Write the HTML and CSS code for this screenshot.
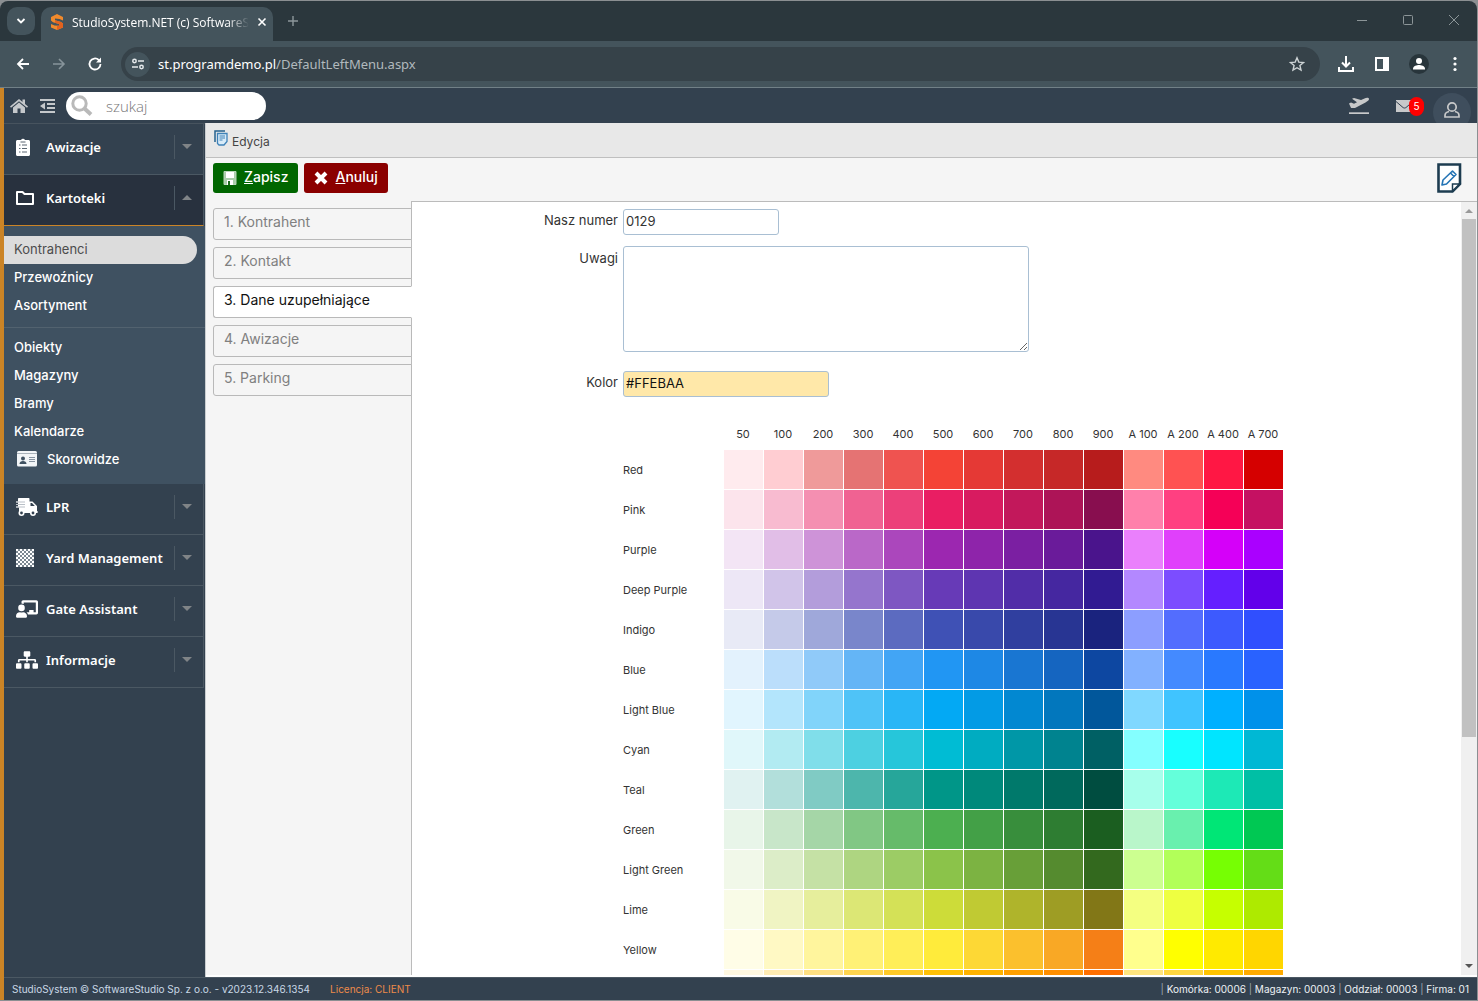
FILE: index.html
```html
<!DOCTYPE html>
<html lang="pl">
<head>
<meta charset="utf-8">
<title>StudioSystem.NET (c) SoftwareStudio</title>
<link rel="stylesheet" href="styles.css">
</head>
<body>
<div class="window">
  <div class="tabstrip">
    <button class="tab-search" aria-label="Szukaj kart"><svg width="10" height="10" viewBox="0 0 10 10"><path d="M1.5 3l3.5 3.5L8.500 3" fill="none" stroke="#fff" stroke-width="1.800"/></svg></button>
    <div class="browser-tab">
      <svg width="14" height="16" viewBox="0 0 14 16"><path d="M7 0l6 3v3.500L9.500 5 5 4.500v1.700l6 1.800 2 1.500v4L7 16l-6-2.500V10l3.500 1.500 4.500.3V10L3 8.200 1 6.500V3z" fill="#f08a2c"/><path d="M5 6.200l6 1.800 2 1.500v4L7 16v-4.300l2 .1V10L5 8.800z" fill="#e2621f"/></svg>
      <span class="tab-title">StudioSystem.NET (c) SoftwareS</span>
      <button class="plain" aria-label="Zamknij kartę"><svg width="10" height="10" viewBox="0 0 10 10"><path d="M1.500 1.500l7 7M8.500 1.500l-7 7" stroke="#fff" stroke-width="1.600"/></svg></button>
    </div>
    <button class="plain new-tab" aria-label="Nowa karta"><svg width="12" height="12" viewBox="0 0 12 12"><path d="M6 1v10M1 6h10" stroke="#8d979b" stroke-width="1.400"/></svg></button>
    <div class="window-controls">
      <button class="plain" aria-label="Minimalizuj"><svg width="12" height="12" viewBox="0 0 12 12"><path d="M1 6.500h10" stroke="#8c9598"/></svg></button>
      <button class="plain" aria-label="Maksymalizuj"><svg width="12" height="12" viewBox="0 0 12 12"><rect x="1.500" y="1.500" width="9" height="9" rx="1" fill="none" stroke="#8c9598"/></svg></button>
      <button class="plain" aria-label="Zamknij"><svg width="12" height="12" viewBox="0 0 12 12"><path d="M1 1l10 10M11 1L1 11" stroke="#8c9598"/></svg></button>
    </div>
  </div>

  <div class="navbar">
    <button class="plain" aria-label="Wstecz"><svg width="16" height="16" viewBox="0 0 16 16"><path d="M14 8H3M8 3L3 8l5 5" fill="none" stroke="#fff" stroke-width="1.800"/></svg></button>
    <button class="plain" aria-label="Dalej"><svg width="16" height="16" viewBox="0 0 16 16"><path d="M2 8h11M8 3l5 5-5 5" fill="none" stroke="#87949a" stroke-width="1.600"/></svg></button>
    <button class="plain" aria-label="Odśwież"><svg width="16" height="16" viewBox="0 0 16 16"><path d="M13.500 8A5.500 5.500 0 1 1 11.800 4L13 5.200" fill="none" stroke="#fff" stroke-width="1.800"/><path d="M14 1.500v5H9z" fill="#fff"/></svg></button>
    <div class="address">
      <span class="site-info"><svg width="14" height="14" viewBox="0 0 14 14" fill="none" stroke="#e6eaec" stroke-width="1.500"><circle cx="3.500" cy="4" r="1.700"/><path d="M7 4h6M1 10h6"/><circle cx="10.500" cy="10" r="1.700"/></svg></span>
      <span class="url"><b>st.programdemo.pl</b>/DefaultLeftMenu.aspx</span>
      <button class="plain" aria-label="Dodaj do zakładek"><svg width="16" height="16" viewBox="0 0 16 16"><path d="M8 1.800l1.800 4.300 4.700.4-3.600 3 1.100 4.600L8 11.700 4 14.100l1.100-4.600-3.600-3 4.700-.4z" fill="none" stroke="#cdd3d5" stroke-width="1.400"/></svg></button>
    </div>
    <div class="nav-actions">
      <button class="plain" aria-label="Pobrane"><svg width="18" height="18" viewBox="0 0 18 18" fill="none" stroke="#fff" stroke-width="2"><path d="M9 1v10M5 7.500l4 4 4-4M2 12v4h14v-4"/></svg></button>
      <button class="plain" aria-label="Panel boczny"><svg width="18" height="18" viewBox="0 0 18 18"><path d="M2 2h14v14H2zM4 4v10h6V4z" fill="#fff" fill-rule="evenodd"/></svg></button>
      <button class="plain" aria-label="Profil"><svg width="20" height="20" viewBox="0 0 20 20"><circle cx="10" cy="10" r="10" fill="#28353b"/><circle cx="10" cy="7" r="3" fill="#fff"/><path d="M4 15.500v-1c0-2.500 4-3.500 6-3.500s6 1 6 3.500v1z" fill="#fff"/></svg></button>
      <button class="plain" aria-label="Menu"><svg width="4" height="16" viewBox="0 0 4 16" fill="#fff"><circle cx="2" cy="2.500" r="1.600"/><circle cx="2" cy="8" r="1.600"/><circle cx="2" cy="13.500" r="1.600"/></svg></button>
    </div>
  </div>

  <div class="app">
    <header class="app-header">
      <a href="#" aria-label="Strona główna"><svg width="18" height="16" viewBox="0 0 18 16" fill="#c5c8cb"><path d="M9 1L0 8.500l1 1.200L9 3.200l8 6.500 1-1.200-3-2.500V1.500h-2.500v2.400z"/><path d="M9 4.500l-6 5V15h4.500v-4.500h3V15H15V9.500z"/></svg></a>
      <a href="#" aria-label="Zwiń menu"><svg width="16" height="14" viewBox="0 0 16 14" fill="#c5c8cb"><path d="M0 0h15v2H0zM7 4h8v2H7zM7 8h8v2H7zM0 12h15v2H0zM0 7l5-3.500v7z"/></svg></a>
      <div class="search"><svg width="22" height="22" viewBox="0 0 22 22" fill="none" stroke="#b9b9b9"><circle cx="8.500" cy="8.500" r="6.700" stroke-width="3"/><path d="M13.500 13.500l6.500 6" stroke-width="4"/></svg><input type="text" placeholder="szukaj" aria-label="szukaj"></div>
      <div class="header-actions">
        <a href="#" aria-label="Odloty"><svg width="22" height="18" viewBox="0 0 22 18" fill="#c8c9ca"><path d="M1 15.300h20v1.700H1z"/><path d="M1 6.500l2-1 3 1.300 3-1.600-5-3.400L6 1l7 2 3.500-1.600c2-.9 4.500-.9 4.500.6 0 1.200-1.500 2.400-3.500 3.400L8 10.500c-.8.400-1.200.5-2 .5H3.800c-.5 0-.8-.2-1-.6z"/></svg></a>
        <a href="#" class="mail" aria-label="Wiadomości"><svg width="17" height="12" viewBox="0 0 17 12"><path d="M0 0h17v12H0z" fill="#c8c9ca"/><path d="M0 1.500l7 6c1 .7 2 .7 3 0l7-6" fill="none" stroke="#32404f" stroke-width="1"/></svg><span class="badge">5</span></a>
        <a href="#" class="user" aria-label="Konto"><svg width="16" height="18" viewBox="0 0 16 18" fill="none" stroke="#c8c9ca" stroke-width="1.700"><circle cx="8" cy="6" r="4.200"/><path d="M5 10.500c-2.500.5-4 2-4 4V16h14v-1.500c0-2-1.500-3.500-4-4"/></svg></a>
      </div>
    </header>

    <div class="body">
      <nav class="sidebar">
        <a href="#" class="item"><svg class="ico" viewBox="0 0 22 18"><path d="M1.500 2H5a2.300 2.300 0 0 1 4 0h3.500c.8 0 1.500.7 1.500 1.500v13c0 .8-.7 1.500-1.500 1.500h-11c-.8 0-1.500-.7-1.500-1.500v-13C0 2.700.7 2 1.500 2z" fill="#fff"/><path d="M3 7h1.500M6 7h5M3 10.500h1.500M6 10.500h5M3 14h1.500M6 14h5M4.500 4h5" stroke="#5a6672" stroke-width="1"/></svg><span>Awizacje</span><i class="caret"></i></a>
        <a href="#" class="item open"><svg class="ico" viewBox="0 0 22 18"><path d="M1 3h5.500l2 2H17v10H1z" fill="none" stroke="#fff" stroke-width="2" stroke-linejoin="round"/></svg><span>Kartoteki</span><i class="caret"></i></a>
        <div class="submenu">
          <a href="#" class="active">Kontrahenci</a>
          <a href="#">Przewoźnicy</a>
          <a href="#">Asortyment</a>
          <hr>
          <a href="#">Obiekty</a>
          <a href="#">Magazyny</a>
          <a href="#">Bramy</a>
          <a href="#">Kalendarze</a>
          <a href="#" class="with-icon"><svg width="20" height="16" viewBox="0 0 20 16"><rect width="20" height="15.500" rx="1.500" fill="#f2f5f7"/><path d="M0 2.500h20" stroke="#a9b2ba" stroke-width="1"/><circle cx="6" cy="7.500" r="2" fill="#3f5161"/><path d="M2.500 13c0-2 1.500-3 3.500-3s3.500 1 3.500 3z" fill="#3f5161"/><path d="M12 6.500h6M12 8.500h6M12 10.500h6" stroke="#8793a0" stroke-width="1"/></svg>Skorowidze</a>
        </div>
        <a href="#" class="item"><svg class="ico" viewBox="0 0 22 18"><path d="M3 0h9.500c.6 0 1 .4 1 1v2.500h3L21 8v5c1 0 1 2 0 2H3V9.500H0V8.500h2V7H0V6h2V4.500H0v-1h2V1c0-.600.4-1 1-1z" fill="#fff"/><path d="M0 3.500h9v1H0zM0 6h9v1H0zM0 8.500h9v1H0z" fill="#b9c0c7"/><circle cx="5.500" cy="15" r="3" fill="#fff"/><circle cx="17" cy="15" r="3" fill="#fff"/><circle cx="5.500" cy="15" r="1.400" fill="#32404f"/><circle cx="17" cy="15" r="1.400" fill="#32404f"/><path d="M14.500 5H16l2.800 3h-4.300z" fill="#32404f"/></svg><span>LPR</span><i class="caret"></i></a>
        <a href="#" class="item"><svg class="ico" viewBox="0 0 22 18"><defs><pattern id="check" width="4" height="4" patternUnits="userSpaceOnUse"><path d="M0 0h2v2H0zM2 2h2v2H2z" fill="#fff"/><path d="M2 0h2v2H2zM0 2h2v2H0z" fill="#7b8791"/></pattern></defs><rect width="18" height="18" fill="url(#check)"/></svg><span>Yard Management</span><i class="caret"></i></a>
        <a href="#" class="item"><svg class="ico" viewBox="0 0 640 512" fill="#fff"><path d="M208 352c-2.400 0-4.800.3-7 1a132 132 0 0 1-82 0c-2.200-.7-4.600-1-7-1C50 352-.3 402.500 0 464.600.1 491 21.700 512 48 512h224c26.300 0 47.900-21 48-47.400.3-62-50-112.600-112-112.600zm-48-32a96 96 0 1 0 0-192 96 96 0 0 0 0 192zM592 0H208c-26.500 0-48 22.300-48 49.600V96c23.400 0 45 6.800 64 17.800V64h352v288h-64v-64H384v64h-76.200c19 16.700 33 38.700 39.700 64H592c26.500 0 48-22.300 48-49.600V49.600C640 22.300 618.500 0 592 0z"/></svg><span>Gate Assistant</span><i class="caret"></i></a>
        <a href="#" class="item"><svg class="ico" viewBox="0 0 640 512" fill="#fff"><path d="M128 352H32c-17.700 0-32 14.300-32 32v96c0 17.700 14.300 32 32 32h96c17.700 0 32-14.300 32-32v-96c0-17.700-14.300-32-32-32zm-24-80h192v48h48v-48h192v48h48v-57.600c0-21.200-17.200-38.400-38.400-38.400H344v-64h40c17.700 0 32-14.300 32-32V32c0-17.700-14.300-32-32-32H256c-17.700 0-32 14.300-32 32v96c0 17.700 14.300 32 32 32h40v64H94.400C73.200 224 56 241.200 56 262.400V320h48zm264 80h-96c-17.700 0-32 14.300-32 32v96c0 17.700 14.300 32 32 32h96c17.700 0 32-14.300 32-32v-96c0-17.700-14.300-32-32-32zm240 0h-96c-17.700 0-32 14.300-32 32v96c0 17.700 14.300 32 32 32h96c17.700 0 32-14.300 32-32v-96c0-17.700-14.300-32-32-32z"/></svg><span>Informacje</span><i class="caret"></i></a>
      </nav>

      <main class="main">
        <div class="crumb"><svg width="14" height="16" viewBox="0 0 14 16"><path d="M1 12V1h10" fill="none" stroke="#24618f" stroke-width="1.500"/><path d="M3.500 3.500h9.500v8l-3 3.500H5L3.500 13.500z" fill="#d8ebf8" stroke="#3f82b8" stroke-width="1.300"/><path d="M5.500 6h5.500M5.500 8h5.500M5.500 10h3" stroke="#3f82b8"/></svg><span>Edycja</span></div>
        <div class="toolbar">
          <button class="btn save"><svg width="14" height="14" viewBox="0 0 14 14"><path d="M1 1h12v12H1z" fill="#a9cda9"/><path d="M1 .5h12v13H1z" fill="none" stroke="#b9d6b9"/><path d="M3 1h8v6H3z" fill="#fff"/><path d="M4 9h6v5H4z" fill="#fff"/><path d="M5 10h2v4H5z" fill="#1c6b1c"/></svg><span><u>Z</u>apisz</span></button>
          <button class="btn cancel"><svg width="14" height="14" viewBox="0 0 14 14"><path d="M2 2l10 10M12 2L2 12" stroke="#fff" stroke-width="4"/></svg><span><u>A</u>nuluj</span></button>
          <svg class="note" width="26" height="30" viewBox="0 0 26 30"><path d="M2.500 1.500h21.500V21l-7.500 7.500h-14z" fill="#fff" stroke="#1d3c50" stroke-width="2.600"/><path d="M16.500 28v-7h7z" fill="#fff" stroke="#1d3c50" stroke-width="1.500"/><path d="M6 22l1-5 9.500-9 3.500 3.500L10.500 21zM14.500 10l3.500 3.500" fill="none" stroke="#2474b5" stroke-width="1.600" stroke-linejoin="round"/></svg>
        </div>
        <div class="workspace">
          <div class="steps">
            <button>1. Kontrahent</button>
            <button>2. Kontakt</button>
            <button class="current">3. Dane uzupełniające</button>
            <button>4. Awizacje</button>
            <button>5. Parking</button>
          </div>
          <div class="panel">
            <form class="form">
              <label for="numer">Nasz numer</label><input id="numer" class="short" type="text" value="0129">
              <label for="uwagi">Uwagi</label><textarea id="uwagi"></textarea>
              <label for="kolor">Kolor</label><input id="kolor" class="color" type="text" value="#FFEBAA">
              <table class="palette">
                <thead><tr id="shades"><td></td></tr></thead>
                <tbody id="swatches"></tbody>
              </table>
            </form>
            <div class="scrollbar" aria-hidden="true"><i class="up"></i><div class="thumb"></div><i class="down"></i></div>
          </div>
        </div>
      </main>
    </div>

    <footer class="footer">
      <span>StudioSystem © SoftwareStudio Sp. z o.o. - v2023.12.346.1354</span>
      <a href="#">Licencja: CLIENT</a>
      <span class="status"><i>|</i> Komórka: 00006 <i>|</i> Magazyn: 00003 <i>|</i> Oddział: 00003 <i>|</i> Firma: 01</span>
    </footer>
  </div>
</div>
<script src="palette.js"></script>
</body>
</html>
```

FILE: styles.css
```css
* { box-sizing: border-box; }
body { margin: 0; background: #8b8f92; font-family: Inter, "Open Sans", sans-serif; color: #333; }
a { color: inherit; text-decoration: none; }
svg { display: block; flex: none; }
button { font-family: inherit; cursor: pointer; }
i { font-style: normal; }
.plain { display: flex; align-items: center; justify-content: center; padding: 0; border: 0; background: none; }

.window { display: flex; flex-direction: column; height: 100vh; padding: 1px 1px 1px 0; overflow: hidden; }

/* browser frame */
.tabstrip { display: flex; flex: none; height: 40px; padding: 6px 0 0 7px; background: #2b373d; border-radius: 8px 8px 0 0; font-family: "Noto Sans", sans-serif; font-size: 12px; }
.tab-search { display: flex; align-items: center; justify-content: center; width: 28px; height: 28px; padding: 0; border: 0; border-radius: 10px; background: #44545c; }
.browser-tab { display: flex; align-items: center; gap: 8px; width: 232px; margin-left: 6px; padding: 0 11px 4px 9px; border-radius: 10px 10px 0 0; background: #44545c; color: #fff; }
.tab-title { flex: 1; white-space: nowrap; font-size: 12px; -webkit-mask-image: linear-gradient(90deg, #000 88%, transparent); mask-image: linear-gradient(90deg, #000 88%, transparent); font-family: "Open Sans", sans-serif; }
.new-tab { width: 40px; height: 28px; }
.window-controls { display: flex; gap: 34px; margin-left: auto; padding: 0 17px 8px 0; }
.navbar { display: flex; align-items: center; gap: 20px; flex: none; height: 47px; padding: 0 19px 0 15px; background: #44545c; border-bottom: 1px solid #718087; }
.address { display: flex; align-items: center; gap: 8px; flex: 1; height: 34px; margin-left: -2px; margin-right: -3px; padding: 0 15px 0 4px; border-radius: 17px; background: #364249; }
.site-info { display: flex; align-items: center; justify-content: center; width: 25px; height: 25px; border-radius: 50%; background: #44545c; }
.url { flex: 1; font-family: "Noto Sans", sans-serif; font-size: 13px; color: #b1b9bd; }
.url b { font-weight: 400; color: #fff; }
.nav-actions { display: flex; align-items: center; gap: 18px; }
.nav-actions .plain:last-child { width: 16px; margin-right: -5px; }

/* application header */
.app { display: flex; flex-direction: column; flex: 1; min-height: 0; border-left: 4px solid #cb8426; background: #33414f; }
.app-header { display: flex; align-items: center; flex: none; gap: 12px; height: 35px; padding: 1px 0 0 6px; overflow: hidden; }
.search { display: flex; align-items: center; width: 200px; height: 28px; margin-left: -2px; padding-left: 5px; border-radius: 14px; background: #fff; }
.search input { width: 150px; margin-left: 13px; padding: 0; border: 0; outline: 0; background: none; font: 300 15px "Open Sans", sans-serif; color: #777; }
.search input::placeholder { color: #777; }
.header-actions { display: flex; align-items: center; margin-left: auto; gap: 26px; padding-right: 6px; }
.mail { display: flex; align-items: center; }
.badge { width: 15px; margin-left: -4px; border-radius: 8px; background: #f00; color: #fff; font-size: 10px; line-height: 19px; text-align: center; }
.user { display: flex; justify-content: center; width: 38px; height: 38px; margin: 12px 0 0 -17px; padding-top: 8px; border-radius: 50%; background: #3f4e5d; }

/* left menu */
.body { display: flex; flex: 1; min-height: 0; }
.sidebar { flex: none; width: 201px; border-top: 1px solid #47535e; }
.item { display: flex; align-items: center; height: 51px; padding: 0 12px 5px 12px; margin-right: 1px; border-right: 1px solid #4b5863; border-bottom: 1px solid #4b5863; color: #fff; font: 600 13px "Noto Sans", sans-serif; }
.item span { flex: 1; padding-left: 8px; white-space: nowrap; }
.ico { width: 22px; height: 18px; }
.item .caret { display: flex; align-items: center; justify-content: flex-end; flex: none; width: 18px; height: 24px; margin-right: -1px; border-left: 1px solid #4b5863; }
.caret::after { content: ""; border: 5px solid transparent; border-top-color: #808487; border-bottom: 0; }
.item.open { background: #28313e; border-bottom-color: #cb8426; }
.open .caret::after { border-top: 0; border-bottom: 5px solid #808487; }
.submenu { padding: 10px 0; background: #3f5161; color: #fff; font-weight: 500; font-size: 13px; }
.submenu a { display: flex; align-items: center; height: 28px; padding: 0 0 2px 10px; }
.submenu .active { margin-right: 8px; border-radius: 0 14px 14px 0; background: #dcdcdc; color: #4c4c4c; font-weight: 400; }
.submenu hr { height: 1px; margin: 7px 0 6px; border: 0; background: #52626f; }
.submenu .with-icon { gap: 10px; padding-left: 13px; }

/* main area */
.main { display: flex; flex-direction: column; flex: 1; min-width: 0; background: #f5f5f5; border-left: 1px solid #c9cdd0; }
.crumb { display: flex; gap: 4px; flex: none; height: 35px; padding: 7px 8px 0; background: #e8e8e8; border-bottom: 1px solid #bfbfbf; font-size: 12px; line-height: 24px; color: #444; }
.toolbar { display: flex; align-items: flex-start; gap: 6px; flex: none; height: 43px; padding: 5px 15px 0 7px; }
.btn { display: flex; align-items: center; gap: 7px; height: 30px; padding: 0 10px 3px; border: 0; border-radius: 3px; color: #fff; font-size: 14px; font-weight: 500; }
.btn svg { margin-top: 3px; }
.save { background: #060; }
.cancel { background: #8b0000; }
.note { margin-left: auto; }
.workspace { display: flex; flex: 1; min-height: 0; border-bottom: 2px solid #fff; }
.steps { display: flex; flex-direction: column; gap: 7px; flex: none; width: 206px; margin-right: -1px; padding: 7px 0 0 7px; z-index: 1; }
.steps button { height: 32px; padding: 0 10px 5px; border: 1px solid #b9b9b9; border-radius: 3px 0 0 3px; background: #f5f5f5; color: #808080; font-size: 14px; text-align: left; white-space: nowrap; }
.steps .current { border-right-color: #fff; background: #fff; color: #111; }
.panel { display: flex; flex: 1; min-width: 0; overflow: hidden; border: 1px solid #bbb; border-width: 1px 0 0 1px; background: #fff; }
.form { display: grid; grid-template-columns: 206px 1fr; grid-auto-rows: max-content; column-gap: 5px; flex: 1; padding-top: 7px; font-size: 13px; }
.form label { padding-top: 3px; text-align: right; color: #333; }
.form input, .form textarea { display: block; border: 1px solid #a9bfd3; border-radius: 3px; padding: 0 2px 2px; background: #fff; font: 13px Inter, sans-serif; color: #333; }
.form input { height: 26px; }
.form .short { width: 156px; }
.form textarea { width: 406px; height: 106px; margin: 11px 0 19px; resize: both; }
.form label[for="uwagi"] { padding-top: 15px; }
.form .color { width: 206px; background: #ffe8a9; color: #111; }
.palette { grid-column: 2; justify-self: start; margin-top: 22px; border-spacing: 0; table-layout: fixed; width: 661px; font-size: 11px; }
.palette th { padding: 0 0 1px; font-weight: 400; text-align: left; }
.palette thead th { width: 40px; height: 31px; padding-right: 2px; text-align: center; white-space: nowrap; }
.palette thead td { width: 101px; padding: 0; }
.palette tbody tr { height: 40px; }
.palette tbody td { padding: 0; border: 1px solid #fff; border-width: 0 1px 1px 0; }
.scrollbar { display: flex; flex-direction: column; align-items: center; flex: none; width: 16px; background: #f0f0f0; }
.scrollbar i { flex: none; border: 4px solid transparent; }
.scrollbar .up { margin: 7px 0 6px; border-top: 0; border-bottom-color: #999; }
.scrollbar .down { margin: auto 0 7px; border-bottom: 0; border-top-color: #555; }
.thumb { width: 14px; height: 67%; background: #c1c1c1; }

.footer { display: flex; align-items: center; flex: none; height: 23px; gap: 20px; padding: 0 8px; color: #c9d8e6; font-size: 10px; border-top: 1px solid #4b5863; }
.footer a { color: #ee8b4a; }
.status { margin-left: auto; color: #eef2f5; }
.status i { color: #9da8b2; }
```

FILE: palette.js
```js
const shades = ['50', '100', '200', '300', '400', '500', '600', '700', '800', '900', 'A 100', 'A 200', 'A 400', 'A 700'];
const palette = [
  ['Red', 'ffebee ffcdd2 ef9a9a e57373 ef5350 f44336 e53935 d32f2f c62828 b71c1c ff8a80 ff5252 ff1744 d50000'],
  ['Pink', 'fce4ec f8bbd0 f48fb1 f06292 ec407a e91e63 d81b60 c2185b ad1457 880e4f ff80ab ff4081 f50057 c51162'],
  ['Purple', 'f3e5f5 e1bee7 ce93d8 ba68c8 ab47bc 9c27b0 8e24aa 7b1fa2 6a1b9a 4a148c ea80fc e040fb d500f9 aa00ff'],
  ['Deep Purple', 'ede7f6 d1c4e9 b39ddb 9575cd 7e57c2 673ab7 5e35b1 512da8 4527a0 311b92 b388ff 7c4dff 651fff 6200ea'],
  ['Indigo', 'e8eaf6 c5cae9 9fa8da 7986cb 5c6bc0 3f51b5 3949ab 303f9f 283593 1a237e 8c9eff 536dfe 3d5afe 304ffe'],
  ['Blue', 'e3f2fd bbdefb 90caf9 64b5f6 42a5f5 2196f3 1e88e5 1976d2 1565c0 0d47a1 82b1ff 448aff 2979ff 2962ff'],
  ['Light Blue', 'e1f5fe b3e5fc 81d4fa 4fc3f7 29b6f6 03a9f4 039be5 0288d1 0277bd 01579b 80d8ff 40c4ff 00b0ff 0091ea'],
  ['Cyan', 'e0f7fa b2ebf2 80deea 4dd0e1 26c6da 00bcd4 00acc1 0097a7 00838f 006064 84ffff 18ffff 00e5ff 00b8d4'],
  ['Teal', 'e0f2f1 b2dfdb 80cbc4 4db6ac 26a69a 009688 00897b 00796b 00695c 004d40 a7ffeb 64ffda 1de9b6 00bfa5'],
  ['Green', 'e8f5e9 c8e6c9 a5d6a7 81c784 66bb6a 4caf50 43a047 388e3c 2e7d32 1b5e20 b9f6ca 69f0ae 00e676 00c853'],
  ['Light Green', 'f1f8e9 dcedc8 c5e1a5 aed581 9ccc65 8bc34a 7cb342 689f38 558b2f 33691e ccff90 b2ff59 76ff03 64dd17'],
  ['Lime', 'f9fbe7 f0f4c3 e6ee9c dce775 d4e157 cddc39 c0ca33 afb42b 9e9d24 827717 f4ff81 eeff41 c6ff00 aeea00'],
  ['Yellow', 'fffde7 fff9c4 fff59d fff176 ffee58 ffeb3b fdd835 fbc02d f9a825 f57f17 ffff8d ffff00 ffea00 ffd600'],
  ['', 'fff8e1 ffecb3 ffe082 ffd54f ffca28 ffc107 ffb300 ffa000 ff8f00 ff6f00 ffe57f ffd740 ffc400 ffab00']
];

const head = document.getElementById('shades');
for (const shade of shades) {
  const th = document.createElement('th');
  th.scope = 'col';
  th.textContent = shade;
  head.append(th);
}

const body = document.getElementById('swatches');
for (const [name, colors] of palette) {
  const row = body.insertRow();
  const th = document.createElement('th');
  th.scope = 'row';
  th.textContent = name;
  row.append(th);
  for (const color of colors.split(' ')) {
    row.insertCell().style.backgroundColor = '#' + color;
  }
}
```
